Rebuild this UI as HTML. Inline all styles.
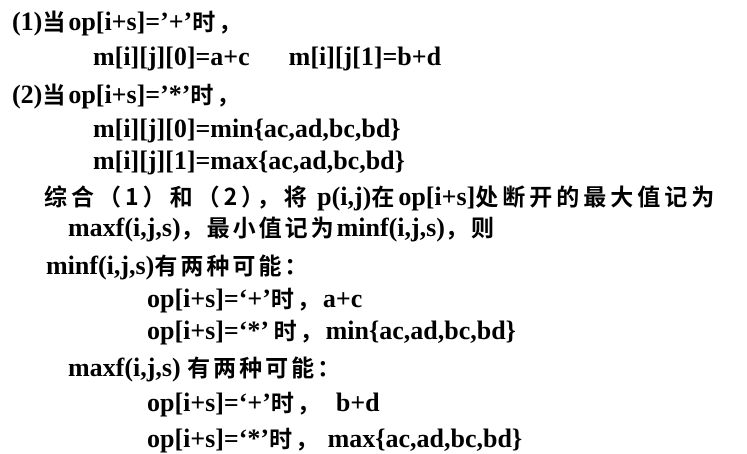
<!DOCTYPE html>
<html><head><meta charset="utf-8"><style>
html,body{margin:0;padding:0;background:#fff;}
body{width:747px;height:454px;position:relative;overflow:hidden;font-family:"Liberation Serif","Noto Serif CJK SC",serif;font-weight:bold;font-size:26px;color:#000;}
.l{position:absolute;white-space:pre;line-height:28px;}
.c{font-family:"Noto Sans CJK SC","WenQuanYi Zen Hei",sans-serif;font-weight:bold;font-size:23px;letter-spacing:3px;}
.w{letter-spacing:4px;}
</style></head><body>
<div class="l" style="left:12px;top:6px">(1)<span class="c">当</span>op[i+s]=’+’<span class="c">时，</span></div>
<div class="l" style="left:93px;top:43px">m[i][j][0]=a+c      m[i][j[1]=b+d</div>
<div class="l" style="left:12px;top:79px">(2)<span class="c">当</span>op[i+s]=’*’<span class="c">时，</span></div>
<div class="l" style="left:93px;top:115px">m[i][j][0]=min{ac,ad,bc,bd}</div>
<div class="l" style="left:93px;top:147px">m[i][j][1]=max{ac,ad,bc,bd}</div>
<div class="l" style="left:44px;top:181px"><span class="c w">综合（1）和（2），将</span> p(i,j)<span class="c w">在</span>op[i+s]<span class="c w">处断开的最大值记为</span></div>
<div class="l" style="left:68px;top:212px">maxf(i,j,s)<span class="c">，最小值记为</span>minf(i,j,s)<span class="c">，则</span></div>
<div class="l" style="left:46px;top:250px">minf(i,j,s)<span class="c">有两种可能：</span></div>
<div class="l" style="left:147px;top:283px">op[i+s]=‘+’<span class="c">时，</span>a+c</div>
<div class="l" style="left:147px;top:315px">op[i+s]=‘*’ <span class="c">时，</span>min{ac,ad,bc,bd}</div>
<div class="l" style="left:68px;top:352px">maxf(i,j,s) <span class="c">有两种可能：</span></div>
<div class="l" style="left:147px;top:387px">op[i+s]=‘+’<span class="c">时，</span>  b+d</div>
<div class="l" style="left:147px;top:423px">op[i+s]=‘*’<span class="c">时，</span> max{ac,ad,bc,bd}</div>
</body></html>
